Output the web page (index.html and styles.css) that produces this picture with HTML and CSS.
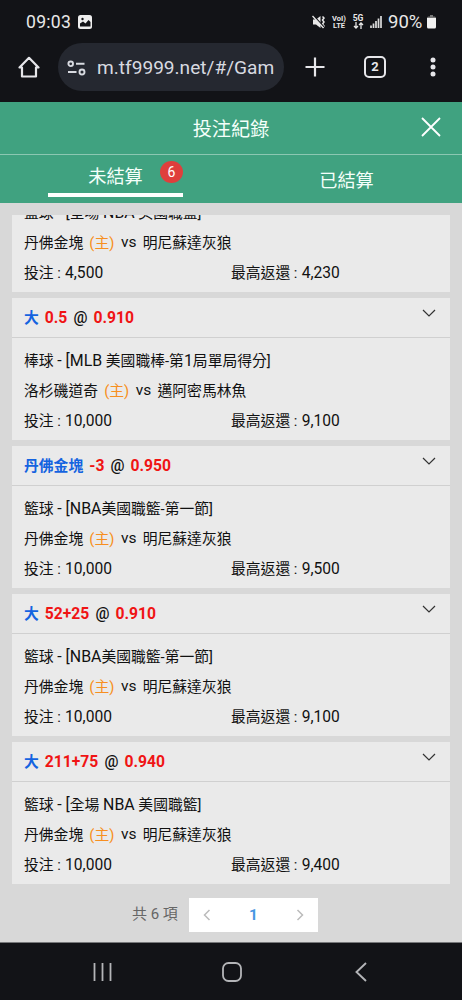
FILE: index.html
```html
<!DOCTYPE html>
<html lang="zh-Hant">
<head>
<meta charset="utf-8">
<title>投注紀錄</title>
<link rel="stylesheet" href="styles.css">
</head>
<body>
<div class="phone">
  <div class="status">
    <span class="clock">09:03</span>
    <svg class="pic" width="14" height="14" viewBox="0 0 14 14"><rect width="14" height="14" rx="2.5" fill="#eee"/><path d="M2 11.5V8.5l3-2 2.500 2 3-3.500 2 2v4.500z" fill="#121317"/><circle cx="4.500" cy="4" r="1.200" fill="#121317"/></svg>
    <span class="fill"></span>
    <svg class="mute" width="14" height="14" viewBox="0 0 14 14"><path d="M1 4.500h3L8.500 1v12L4 9.500H1z" fill="#e8e8e8"/><path d="M10.500 1.500l1.500 1.500-1.500 2 1.500 2-1.500 2 1.500 2-1 1.500" fill="none" stroke="#e8e8e8" stroke-width="1.500"/><path d="M1.500 0.500L12 12" stroke="#121317" stroke-width="1.200"/><path d="M0.500 1L11.500 13" stroke="#e8e8e8" stroke-width="1.300"/></svg>
    <span class="tiny lte"><b>VoI)</b><b>LTE</b></span>
    <span class="tiny five"><b>5G</b><svg width="11" height="7" viewBox="0 0 11 7"><path d="M3 0v6M1 4l2 2 2-2M8 7V1M6 3l2-2 2 2" fill="none" stroke="#e8e8e8" stroke-width="1.300"/></svg></span>
    <svg class="signal" width="12" height="12" viewBox="0 0 12 12"><path d="M1 12V9.500M3.500 12V7.500M6 12V5M8.500 12V2.500" stroke="#ddd" stroke-width="1.700"/><path d="M11 12V0" stroke="#ddd" stroke-width="1.700"/></svg>
    <span class="percent">90%</span>
    <svg class="battery" width="9" height="14" viewBox="0 0 9 14"><path d="M3 0h3v1.500h1.500Q9 1.500 9 3v1H0V3q0-1.500 1.500-1.500H3z" fill="#777"/><path d="M0 3h9v9q0 1.500-1.500 1.500h-6Q0 13.500 0 12z" fill="#f2f2f2"/></svg>
  </div>
  <div class="browser">
    <svg class="home" width="22" height="22" viewBox="0 0 22 22"><path d="M1.500 11.500L11 1.800l9.500 9.700H18v9H4v-9z" fill="none" stroke="#e6e6ea" stroke-width="2.200" stroke-linejoin="round" stroke-linecap="round"/></svg>
    <div class="url">
      <svg width="19" height="16" viewBox="0 0 19 16" fill="none" stroke="#d8dae0" stroke-width="1.900"><circle cx="3.700" cy="3.800" r="2.300"/><path d="M9 3.800h8.500M1 12h8.500"/><circle cx="15" cy="12" r="2.500"/></svg>
      <span>m.tf9999.net/#/Gam</span>
    </div>
    <svg class="plus" width="20" height="20" viewBox="0 0 20 20"><path d="M10 .5v19M.5 10h19" stroke="#e6e6ea" stroke-width="2.200"/></svg>
    <span class="tabcount">2</span>
    <svg class="dots" width="6" height="20" viewBox="0 0 6 20" fill="#e6e6ea"><circle cx="3" cy="3" r="2.500"/><circle cx="3" cy="10" r="2.500"/><circle cx="3" cy="17" r="2.500"/></svg>
  </div>
  <header class="title">
    <h1>投注紀錄</h1>
    <svg class="close" width="20" height="20" viewBox="0 0 20 20"><path d="M1 1l18 18M19 1L1 19" stroke="#fff" stroke-width="1.800"/></svg>
  </header>
  <nav class="tabs">
    <div class="tab"><span class="active">未結算<i class="badge">6</i></span></div>
    <div class="tab"><span>已結算</span></div>
  </nav>
  <main class="list">
    <section class="card">
      <div class="body">
        <p>籃球 <span class="lat">- [</span>全場 <span class="lat">NBA</span> 美國職籃]</p>
        <p>丹佛金塊 <em>(主)</em> <span class="vs">vs</span> 明尼蘇達灰狼</p>
        <p class="sums"><span>投注 : <span class="num">4,500</span></span><span>最高返還 : <span class="num">4,230</span></span></p>
      </div>
    </section>
    <section class="card">
      <div class="head"><span class="pick">大</span><span class="odd">0.5</span><span class="at">@</span><span class="odd">0.910</span><svg class="chev" width="14" height="8" viewBox="0 0 14 8"><path d="M1 1l6 6 6-6" fill="none" stroke="#333" stroke-width="1.200"/></svg></div>
      <div class="body">
        <p>棒球 <span class="lat">- [MLB</span> 美國職棒-第<span class="lat">1</span>局單局得分]</p>
        <p>洛杉磯道奇 <em>(主)</em> <span class="vs">vs</span> 邁阿密馬林魚</p>
        <p class="sums"><span>投注 : <span class="num">10,000</span></span><span>最高返還 : <span class="num">9,100</span></span></p>
      </div>
    </section>
    <section class="card">
      <div class="head"><span class="pick">丹佛金塊</span><span class="odd">-3</span><span class="at">@</span><span class="odd">0.950</span><svg class="chev" width="14" height="8" viewBox="0 0 14 8"><path d="M1 1l6 6 6-6" fill="none" stroke="#333" stroke-width="1.200"/></svg></div>
      <div class="body">
        <p>籃球 <span class="lat">- [NBA</span>美國職籃-第一節]</p>
        <p>丹佛金塊 <em>(主)</em> <span class="vs">vs</span> 明尼蘇達灰狼</p>
        <p class="sums"><span>投注 : <span class="num">10,000</span></span><span>最高返還 : <span class="num">9,500</span></span></p>
      </div>
    </section>
    <section class="card">
      <div class="head"><span class="pick">大</span><span class="odd">52+25</span><span class="at">@</span><span class="odd">0.910</span><svg class="chev" width="14" height="8" viewBox="0 0 14 8"><path d="M1 1l6 6 6-6" fill="none" stroke="#333" stroke-width="1.200"/></svg></div>
      <div class="body">
        <p>籃球 <span class="lat">- [NBA</span>美國職籃-第一節]</p>
        <p>丹佛金塊 <em>(主)</em> <span class="vs">vs</span> 明尼蘇達灰狼</p>
        <p class="sums"><span>投注 : <span class="num">10,000</span></span><span>最高返還 : <span class="num">9,100</span></span></p>
      </div>
    </section>
    <section class="card">
      <div class="head"><span class="pick">大</span><span class="odd">211+75</span><span class="at">@</span><span class="odd">0.940</span><svg class="chev" width="14" height="8" viewBox="0 0 14 8"><path d="M1 1l6 6 6-6" fill="none" stroke="#333" stroke-width="1.200"/></svg></div>
      <div class="body">
        <p>籃球 <span class="lat">- [</span>全場 <span class="lat">NBA</span> 美國職籃]</p>
        <p>丹佛金塊 <em>(主)</em> <span class="vs">vs</span> 明尼蘇達灰狼</p>
        <p class="sums"><span>投注 : <span class="num">10,000</span></span><span>最高返還 : <span class="num">9,400</span></span></p>
      </div>
    </section>
  </main>
  <footer class="pager">
    <span class="total">共 6 項</span>
    <div class="pages">
      <svg width="8" height="12" viewBox="0 0 8 12"><path d="M6.500 1l-5 5 5 5" fill="none" stroke="#bbb" stroke-width="1.500"/></svg>
      <b>1</b>
      <svg width="8" height="12" viewBox="0 0 8 12"><path d="M1.500 1l5 5-5 5" fill="none" stroke="#bbb" stroke-width="1.500"/></svg>
    </div>
  </footer>
  <div class="navbar">
    <svg width="20" height="20" viewBox="0 0 20 20"><path d="M1.500 1v18M9.500 1v18M17.500 1v18" stroke="#b4b5b8" stroke-width="1.800"/></svg>
    <svg width="20" height="20" viewBox="0 0 20 20"><rect x="1" y="1" width="18" height="18" rx="5.500" fill="none" stroke="#b4b5b8" stroke-width="1.800"/></svg>
    <svg width="20" height="20" viewBox="0 0 20 20"><path d="M15 1l-9.500 9 9.500 9" fill="none" stroke="#b4b5b8" stroke-width="1.900"/></svg>
  </div>
</div>
</body>
</html>
```
FILE: styles.css
```css
* { box-sizing: border-box; }
body { margin: 0; font-family: Roboto, "Noto Sans CJK TC", sans-serif; background: #121317; }
svg { display: block; flex: none; }
.phone { width: 462px; height: 1000px; display: flex; flex-direction: column; overflow: hidden; background: #121317; }

.status { height: 43px; flex: none; display: flex; align-items: center; padding: 1px 26px 0 26px; color: #e8e8e8; }
.clock { font-size: 17.600px; letter-spacing: .25px; width: 52px; }
.fill { flex: 1; }
.mute { margin-right: 6px; }
.tiny { display: flex; flex-direction: column; align-items: center; font-size: 7.500px; line-height: 7.500px; }
.lte { width: 14px; margin-right: 6px; }
.five { width: 12px; margin-right: 6px; font-size: 8.500px; }
.signal { margin-right: 6px; }
.percent { font-size: 18.500px; width: 37px; margin-right: 2px; }

.browser { height: 58.500px; flex: none; display: flex; align-items: flex-start; color: #d8dae0; }
.home { margin: 13px 0 0 18px; }
.url { margin-left: 18px; width: 226px; height: 48px; border-radius: 24px; background: #252830; display: flex; align-items: center; padding: 1px 0 0 9px; gap: 11px; font-size: 19.100px; white-space: nowrap; }
.plus { margin: 14px 0 0 21px; }
.tabcount { margin: 13px 0 0 39px; width: 22px; height: 22px; border: 2px solid #e6e6ea; border-radius: 5px; text-align: center; font-weight: bold; font-size: 13px; line-height: 18px; color: #e6e6ea; }
.dots { margin: 14px 0 0 44px; }

.title { height: 53.500px; flex: none; position: relative; background: #40a280; border-bottom: 1px solid #8cc7b2; display: flex; justify-content: center; align-items: center; color: #f4fffa; }
.title h1 { margin: 5px 0 0; font-size: 19.200px; font-weight: 400; line-height: 28px; }
.close { position: absolute; right: 21px; top: 15px; }
.tabs { height: 48px; flex: none; display: flex; background: #40a280; color: #f4fffa; font-size: 18.200px; }
.tab { flex: 1; display: flex; justify-content: center; align-items: flex-start; line-height: 28px; }
.tab span { margin-top: 12px; }
.tab .active { position: relative; width: 135px; height: 34px; margin-top: 8px; border-bottom: 4px solid #fff; text-align: center; }
.badge { position: absolute; right: 0; top: -2px; width: 23px; height: 22px; border-radius: 50%; background: #df3f3c; font-style: normal; font-size: 14px; line-height: 22px; text-align: center; color: #fff; }

.list { height: 681px; flex: none; background: #d8d8d8; padding: 0 12px; border-top: 12px solid #d8d8d8; display: flex; flex-direction: column; justify-content: flex-end; gap: 6px; overflow: hidden; }
.card { flex: none; background: #eaeaea; color: #111; font-size: 14.800px; }
.head { height: 40px; border-bottom: 1px solid #d0d0d0; display: flex; align-items: center; gap: 6px; padding: 1px 14px 0 12px; font-weight: 500; line-height: 24px; }
.pick { color: #1463e0; font-weight: bold; }
.odd { color: #f01414; font-weight: bold; font-size: 15.700px; }
.at { font-size: 15.600px; }
.chev { margin: -10px 0 0 auto; }
.body { padding: 8px 12px 4px; }
.body p { margin: 0; height: 30px; line-height: 30px; white-space: pre; }
.body em { font-style: normal; color: #f78f20; margin: 0 3px 0 2.500px; }
.vs { position: relative; top: -1px; margin-right: 2.500px; font-size: 15.500px; }
.lat { font-size: 15.900px; }
.sums { display: flex; }
.sums > span { width: 50%; }
.num { font-size: 15.600px; margin-left: .5px; }

.pager { height: 58.500px; flex: none; background: #d8d8d8; display: flex; align-items: flex-start; padding: 14px 0 0 132px; color: #666; font-size: 15px; border-bottom: 1px solid #77787a; }
.total { width: 57px; line-height: 33px; }
.pages { width: 129px; height: 34px; background: #fff; display: flex; justify-content: space-between; align-items: center; padding: 0 14px; }
.pages b { color: #4797e2; font-size: 15.500px; }
.navbar { flex: 1; display: flex; justify-content: space-between; align-items: center; padding: 2px 91px 0 93px; }
```
